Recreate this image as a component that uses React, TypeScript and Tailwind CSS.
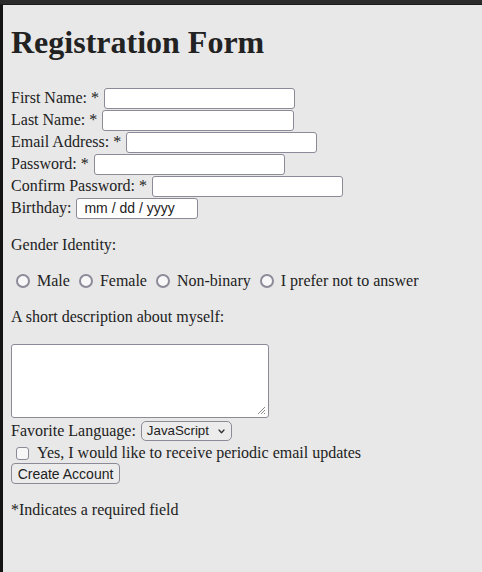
import React from "react";

const field =
  "ml-[5px] h-[21px] bg-white border border-[#8d8a97] rounded-[3px] outline-none px-[4px] text-[13px] font-['Liberation_Sans',Arial,sans-serif]";

function Row({ label, width }: { label: string; width: string }) {
  return (
    <div className="flex items-center h-[22px]">
      <span>{label}</span>
      <input type="text" className={`${field} ${width}`} />
    </div>
  );
}

function Radio({ first, label }: { first?: boolean; label: string }) {
  return (
    <>
      <span
        className={`${first ? "ml-[5px]" : "ml-[9px]"} mr-[7px] w-[14px] h-[14px] rounded-full border-2 border-[#8e8a9a] bg-[#f7f7f7] shrink-0`}
      />
      <span>{label}</span>
    </>
  );
}

export default function App() {
  return (
    <div className="min-h-screen bg-[#e8e8e8] flex flex-col text-[#222] font-['Liberation_Serif','Times_New_Roman',serif] text-[16px] leading-[18px]">
      <div className="h-[5px] bg-[#2b2b2b] border-b border-[#1a1a1a]" />
      <div className="flex-1 flex">
        <div className="w-[3px] bg-[#141414]" />
        <div className="flex-1 pl-[8px] flex flex-col">
          <h1 className="mt-[19px] mb-[26px] text-[32px] leading-[37px] font-bold">
            Registration Form
          </h1>
          <Row label="First Name: *" width="w-[191px]" />
          <Row label="Last Name: *" width="w-[192px]" />
          <Row label="Email Address: *" width="w-[191px]" />
          <Row label="Password: *" width="w-[191px]" />
          <Row label="Confirm Password: *" width="w-[191px]" />
          <div className="flex items-center h-[22px]">
            <span>Birthday:</span>
            <div className="ml-[5px] w-[122px] h-[21px] bg-white border border-[#8d8a97] rounded-[3px] pl-[7px] flex items-center text-[14px] font-['Liberation_Sans',Arial,sans-serif] text-[#222]">
              mm / dd / yyyy
            </div>
          </div>

          <p className="mt-[17px]">Gender Identity:</p>

          <div className="mt-[16px] flex items-center h-[22px]">
            <Radio first label="Male" />
            <Radio label="Female" />
            <Radio label="Non-binary" />
            <Radio label="I prefer not to answer" />
          </div>

          <p className="mt-[16px]">A short description about myself:</p>

          <div className="mt-[18px] relative w-[258px] h-[74px] bg-white border border-[#8d8a97] rounded-[3px]">
            <svg
              className="absolute right-[2px] bottom-[2px]"
              width="10"
              height="10"
              viewBox="0 0 10 10"
            >
              <path
                d="M9 2 L2 9 M9 5 L5 9 M9 8 L8 9"
                stroke="#8a8a8a"
                strokeWidth="1"
                fill="none"
              />
            </svg>
          </div>

          <div className="mt-[1px] flex items-center h-[24px]">
            <span>Favorite Language:</span>
            <div className="ml-[5px] w-[91px] h-[20px] border border-[#8d8a97] rounded-[5px] bg-[#ececec] pl-[5px] pr-[6px] flex items-center justify-between text-[13.3px] font-['Liberation_Sans',Arial,sans-serif] text-[#222]">
              <span>JavaScript</span>
              <svg width="7" height="5" viewBox="0 0 7 5">
                <path
                  d="M1 1 L3.5 3.8 L6 1"
                  stroke="#333"
                  strokeWidth="1.3"
                  fill="none"
                  strokeLinecap="round"
                  strokeLinejoin="round"
                />
              </svg>
            </div>
          </div>

          <div className="flex items-center h-[20px]">
            <span className="ml-[5px] mr-[8px] w-[13px] h-[13px] rounded-[3px] border border-[#8d8a97] bg-[#f7f7f7] shrink-0" />
            <span>Yes, I would like to receive periodic email updates</span>
          </div>

          <div className="flex">
            <button className="h-[21px] w-[109px] border border-[#8d8a97] rounded-[4px] bg-[#ececec] text-[14px] leading-[16px] font-['Liberation_Sans',Arial,sans-serif] text-[#222] flex items-center justify-center">
              Create Account
            </button>
          </div>

          <p className="mt-[17px]">*Indicates a required field</p>
        </div>
      </div>
    </div>
  );
}
